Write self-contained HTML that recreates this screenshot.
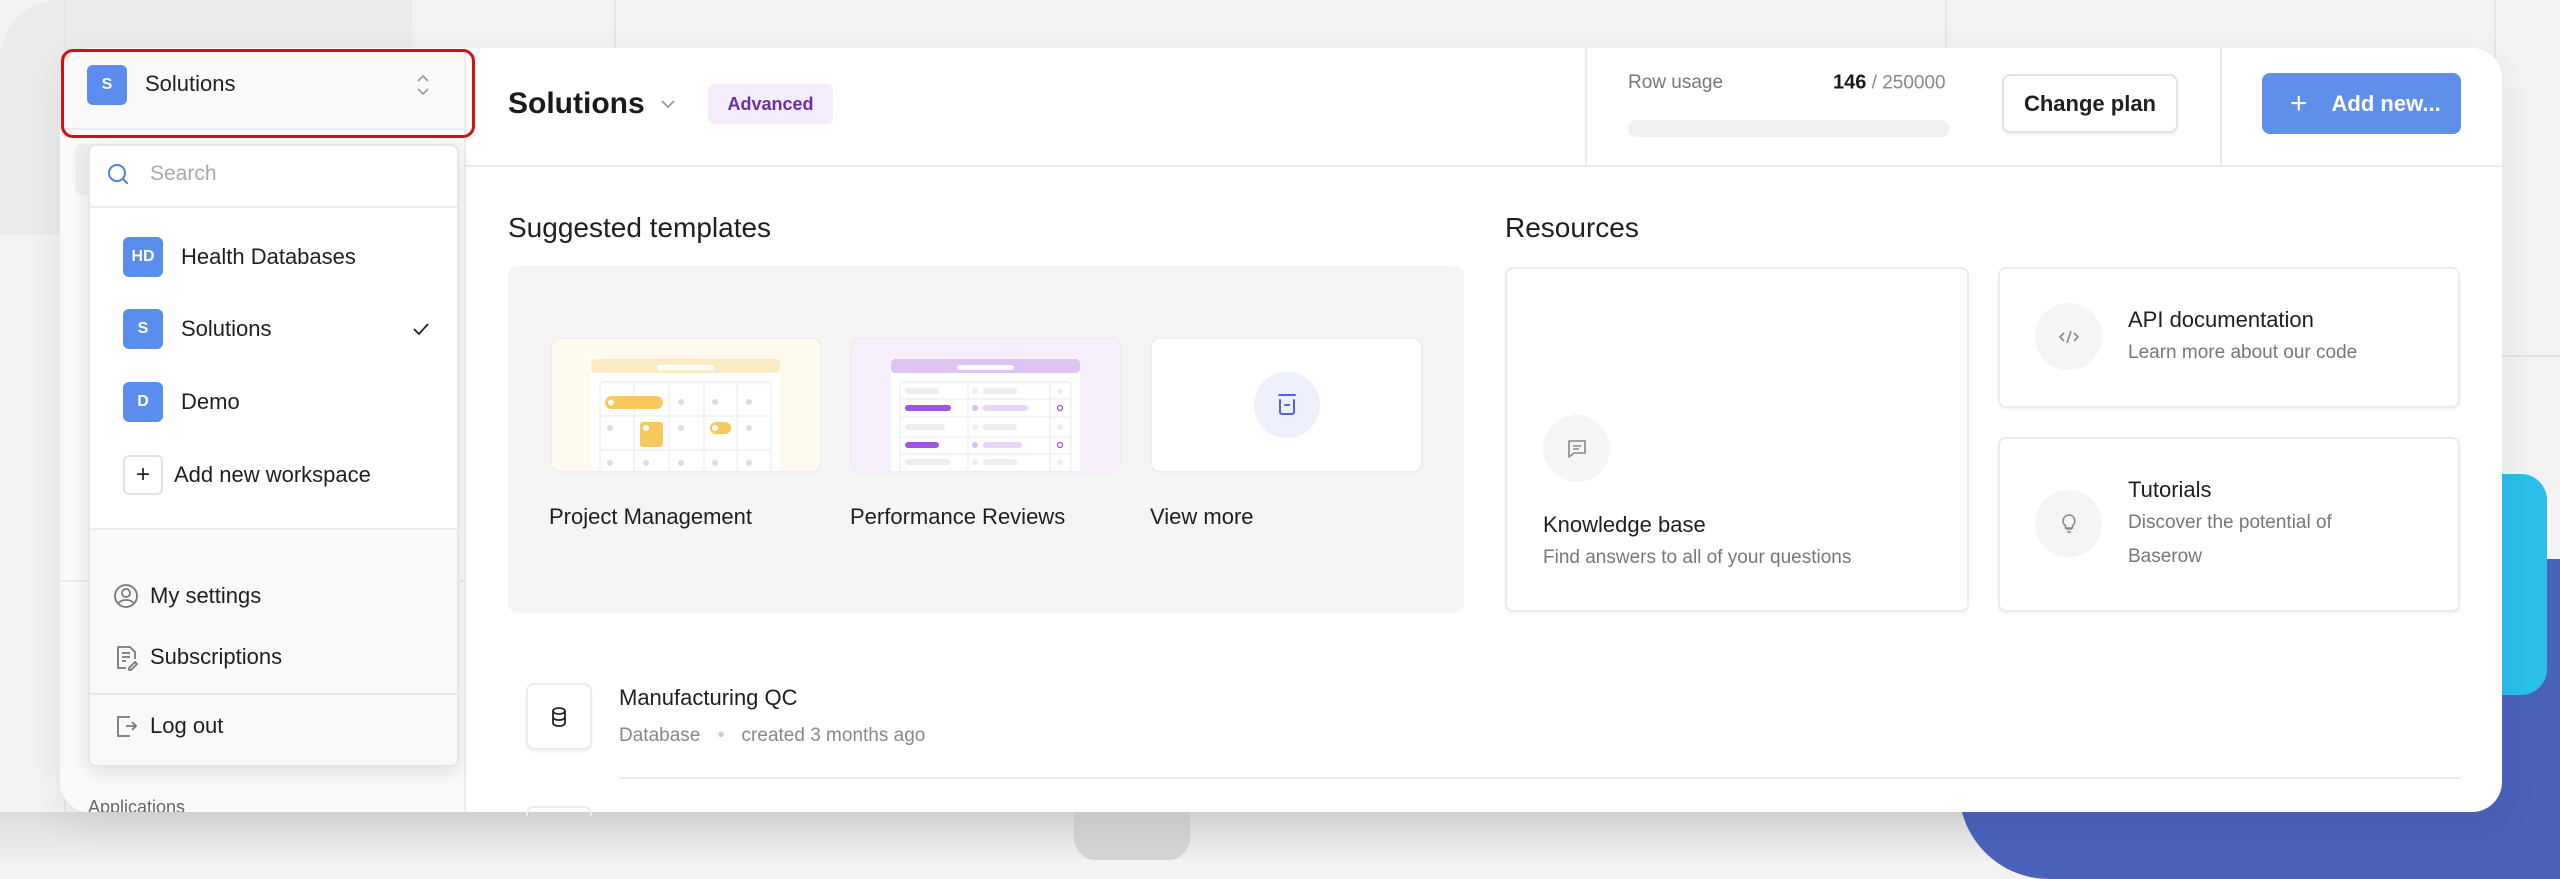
<!DOCTYPE html>
<html><head><meta charset="utf-8"><style>
*{box-sizing:border-box;margin:0;padding:0}
body{width:2560px;height:860px;overflow:hidden;position:relative;background:#f3f3f3;font-family:"Liberation Sans",sans-serif;color:#1f1f1f}
.a{position:absolute}
.vl{position:absolute;width:2px;background:#e6e6e6}
.av{position:absolute;width:40px;height:40px;border-radius:6px;background:#5b8def;color:#fff;font-weight:bold;font-size:16px;display:flex;align-items:center;justify-content:center}
.t{position:absolute;white-space:nowrap;transform:translateY(-50%)}
.card{position:absolute;background:#fff;border:2px solid #ececec;border-radius:8px;box-shadow:0 2px 3px rgba(0,0,0,.05)}
.circ{position:absolute;width:67px;height:67px;border-radius:50%;background:#f5f5f5;display:flex;align-items:center;justify-content:center}
</style></head><body>
<!-- background -->
<div class="a" style="left:0;top:0;width:412px;height:234px;background:#ececec;border-top-left-radius:60px"></div>
<div class="a" style="left:0;top:129px;width:60px;height:105px;background:#ececec"></div>
<div class="vl" style="left:64px;top:0;height:860px"></div>
<div class="vl" style="left:614px;top:0;height:860px"></div>
<div class="vl" style="left:1945px;top:0;height:860px"></div>
<div class="vl" style="left:2494px;top:0;height:860px"></div>
<div class="a" style="left:0;top:812px;width:2560px;height:48px;background:linear-gradient(#dcdcdc,#efefef)"></div>
<div class="a" style="left:1074px;top:800px;width:116px;height:60px;background:#d3d3d3;border-radius:0 0 22px 22px"></div>
<div class="a" style="left:1959px;top:559px;width:620px;height:320px;background:#4a62ba;border-radius:0 0 0 90px"></div>
<div class="a" style="left:2420px;top:474px;width:127px;height:221px;background:#2bbfe9;border-radius:0 26px 26px 0"></div>
<div class="a" style="left:2490px;top:355px;width:70px;height:2px;background:#e4e4e4"></div>

<!-- main window -->
<div class="a" style="left:60px;top:48px;width:2442px;height:764px;background:#fff;border-radius:30px;overflow:hidden;box-shadow:0 10px 40px rgba(0,0,0,.08)">
 <div class="a" style="left:0;top:0;width:406px;height:764px;background:#fafafa;border-right:2px solid #ececec"></div>
 <div class="a" style="left:0;top:80px;width:406px;height:2px;background:#ececec"></div>
 <div class="a" style="left:0;top:532px;width:406px;height:2px;background:#ececec"></div>
 <div class="a" style="left:15px;top:96px;width:380px;height:51px;background:#f0f0f0;border-radius:6px"></div>
 <div class="a" style="left:28px;top:749px;font-size:18px;color:#666">Applications</div>
 <div class="a" style="left:406px;top:117px;width:2036px;height:2px;background:#ececec"></div>
 <div class="a" style="left:1525px;top:0;width:2px;height:118px;background:#ececec"></div>
 <div class="a" style="left:2160px;top:0;width:2px;height:118px;background:#ececec"></div>
</div>

<!-- sidebar header -->
<div class="av" style="left:87px;top:65px">S</div>
<div class="t" style="left:145px;top:84px;font-size:22px">Solutions</div>
<svg class="a" style="left:414px;top:72px" width="18" height="26" viewBox="0 0 18 26"><path d="M4 9l5-5 5 5M4 17l5 5 5-5" fill="none" stroke="#999" stroke-width="1.6"/></svg>
<div class="a" style="left:61px;top:49px;width:414px;height:89px;border:3px solid #d50f0f;border-radius:12px"></div>

<!-- header main -->
<div class="t" style="left:508px;top:104px;font-size:30px;font-weight:bold;color:#1a1a1a">Solutions</div>
<svg class="a" style="left:660px;top:98px" width="16" height="12" viewBox="0 0 16 12"><path d="M2 3l6 6 6-6" fill="none" stroke="#999" stroke-width="1.8"/></svg>
<div class="a" style="left:708px;top:84px;width:125px;height:40px;background:#f5edfc;border-radius:6px;color:#6b2fa0;font-weight:bold;font-size:18px;display:flex;align-items:center;justify-content:center">Advanced</div>
<div class="t" style="left:1628px;top:83px;font-size:19px;color:#777">Row usage</div>
<div class="t" style="left:1833px;top:83px;font-size:19px;color:#888"><b style="color:#1a1a1a;font-size:20px">146</b> / 250000</div>
<div class="a" style="left:1628px;top:120px;width:321px;height:17px;background:#f0f0f0;border-radius:9px"></div>
<div class="a" style="left:2002px;top:74px;width:176px;height:59px;border:2px solid #e2e2e2;border-radius:8px;background:#fff;box-shadow:0 2px 3px rgba(0,0,0,.06);font-size:22px;font-weight:bold;display:flex;align-items:center;justify-content:center">Change plan</div>
<div class="a" style="left:2262px;top:73px;width:199px;height:61px;background:#5f8fe8;border-radius:8px;color:#fff;font-size:22px;font-weight:bold;display:flex;align-items:center;padding-left:28px"><span style="font-weight:normal;font-size:30px;margin-right:24px">+</span>Add new...</div>

<!-- templates -->
<div class="t" style="left:508px;top:228px;font-size:28px">Suggested templates</div>
<div class="a" style="left:508px;top:266px;width:956px;height:347px;background:#f5f5f5;border-radius:10px"></div>
<div class="a" style="left:550px;top:337px;width:272px;height:136px;background:#fffaee;border:2px solid #efefef;border-radius:10px;overflow:hidden">
<svg width="272" height="136" viewBox="550 337 272 136" style="position:absolute;left:-2px;top:-2px">
<rect x="591" y="359" width="189" height="120" fill="#fff"/>
<rect x="591" y="359" width="189" height="14" rx="4" fill="#fcecc6"/>
<rect x="657" y="365" width="57" height="5" rx="2.5" fill="#fff"/>
<g stroke="#eee" stroke-width="1.2" fill="none"><rect x="600" y="382" width="171" height="100" rx="4"/><path d="M634 382v100M669 382v100M704 382v100M737 382v100M600 416h171M600 450h171"/></g>
<rect x="605" y="396" width="58" height="13" rx="6.5" fill="#f8c95f"/><circle cx="611" cy="402.5" r="3" fill="#fff"/>
<rect x="640" y="422" width="23" height="25" rx="3" fill="#f8c95f"/><circle cx="646" cy="428" r="3" fill="#fff"/>
<rect x="710" y="422" width="21" height="12" rx="6" fill="#f8c95f"/><circle cx="715" cy="428" r="3" fill="#fff"/>
<g fill="#ddd"><circle cx="681" cy="402" r="3"/><circle cx="715" cy="402" r="3"/><circle cx="749" cy="402" r="3"/><circle cx="610" cy="428" r="3"/><circle cx="681" cy="428" r="3"/><circle cx="749" cy="428" r="3"/><circle cx="610" cy="463" r="3"/><circle cx="646" cy="463" r="3"/><circle cx="681" cy="463" r="3"/><circle cx="715" cy="463" r="3"/><circle cx="749" cy="463" r="3"/></g>
</svg></div>
<div class="a" style="left:850px;top:337px;width:272px;height:136px;background:#f7effc;border:2px solid #efefef;border-radius:10px;overflow:hidden">
<svg width="272" height="136" viewBox="850 337 272 136" style="position:absolute;left:-2px;top:-2px">
<rect x="891" y="359" width="189" height="120" fill="#fff"/>
<rect x="891" y="359" width="189" height="14" rx="4" fill="#dfc3f3"/>
<rect x="957" y="365" width="57" height="5" rx="2.5" fill="#fff"/>
<g stroke="#eee" stroke-width="1.2" fill="none"><rect x="900" y="382" width="171" height="100" rx="4"/><path d="M968 382v100M1050 382v100M900 399h171M900 417h171M900 437h171M900 454h171"/></g>
<g fill="#eee"><rect x="905" y="388" width="34" height="6" rx="3"/><rect x="905" y="424" width="40" height="6" rx="3"/><rect x="905" y="459" width="45" height="6" rx="3"/><rect x="983" y="388" width="34" height="6" rx="3"/><rect x="983" y="424" width="34" height="6" rx="3"/><rect x="983" y="459" width="34" height="6" rx="3"/><circle cx="975" cy="391" r="3"/><circle cx="975" cy="427" r="3"/><circle cx="975" cy="462" r="3"/><circle cx="1060" cy="391" r="3"/><circle cx="1060" cy="427" r="3"/><circle cx="1060" cy="462" r="3"/></g>
<rect x="905" y="405" width="46" height="6" rx="3" fill="#a155e0"/><rect x="905" y="442" width="34" height="6" rx="3" fill="#a155e0"/>
<rect x="983" y="405" width="45" height="6" rx="3" fill="#e8d3f8"/><rect x="983" y="442" width="39" height="6" rx="3" fill="#e8d3f8"/>
<circle cx="975" cy="408" r="3" fill="#dcbcf5"/><circle cx="975" cy="445" r="3" fill="#dcbcf5"/>
<circle cx="1060" cy="408" r="2.5" fill="none" stroke="#a155e0" stroke-width="1.3"/><circle cx="1060" cy="445" r="2.5" fill="none" stroke="#a155e0" stroke-width="1.3"/>
</svg></div>
<div class="a" style="left:1150px;top:337px;width:273px;height:136px;background:#fff;border:2px solid #efefef;border-radius:10px"></div>
<div class="a" style="left:1254px;top:372px;width:66px;height:66px;border-radius:50%;background:#eef0fc"></div>
<svg class="a" style="left:1276px;top:393px" width="22" height="24" viewBox="0 0 22 24"><path d="M3 2h16M4 7v12a2 2 0 0 0 2 2h10a2 2 0 0 0 2-2V7M9 12h4" fill="none" stroke="#4f63e0" stroke-width="2" stroke-linecap="round"/></svg>
<div class="t" style="left:549px;top:517px;font-size:22px">Project Management</div>
<div class="t" style="left:850px;top:517px;font-size:22px">Performance Reviews</div>
<div class="t" style="left:1150px;top:517px;font-size:22px">View more</div>

<!-- resources -->
<div class="t" style="left:1505px;top:228px;font-size:28px">Resources</div>
<div class="card" style="left:1505px;top:267px;width:464px;height:345px"></div>
<div class="circ" style="left:1543px;top:415px"><svg width="24" height="24" viewBox="0 0 24 24"><path d="M4 4h16v12H9l-5 4z M8 9h8M8 12h6" fill="none" stroke="#888" stroke-width="1.6" stroke-linejoin="round"/></svg></div>
<div class="t" style="left:1543px;top:525px;font-size:22px">Knowledge base</div>
<div class="t" style="left:1543px;top:558px;font-size:19px;color:#777">Find answers to all of your questions</div>
<div class="card" style="left:1998px;top:267px;width:462px;height:141px"></div>
<div class="circ" style="left:2035px;top:303px"><svg width="24" height="24" viewBox="0 0 24 24"><path d="M7 8l-4 4 4 4M17 8l4 4-4 4M14 6l-4 12" fill="none" stroke="#888" stroke-width="1.6"/></svg></div>
<div class="t" style="left:2128px;top:320px;font-size:22px">API documentation</div>
<div class="t" style="left:2128px;top:353px;font-size:19px;color:#777">Learn more about our code</div>
<div class="card" style="left:1998px;top:437px;width:462px;height:175px"></div>
<div class="circ" style="left:2035px;top:490px"><svg width="24" height="24" viewBox="0 0 24 24"><path d="M9 17h6M10 20h4M12 3a6 6 0 0 0-3.5 10.8V16h7v-2.2A6 6 0 0 0 12 3z" fill="none" stroke="#888" stroke-width="1.6"/></svg></div>
<div class="t" style="left:2128px;top:490px;font-size:22px">Tutorials</div>
<div class="t" style="left:2128px;top:523px;font-size:19px;color:#777">Discover the potential of</div>
<div class="t" style="left:2128px;top:557px;font-size:19px;color:#777">Baserow</div>

<!-- app list -->
<div class="a" style="left:526px;top:683px;width:66px;height:67px;border:2px solid #ececec;border-radius:8px;background:#fff;box-shadow:0 2px 3px rgba(0,0,0,.05)"></div>
<svg class="a" style="left:549px;top:706px" width="20" height="22" viewBox="0 0 20 22"><ellipse cx="10" cy="5" rx="6" ry="3" fill="none" stroke="#222" stroke-width="1.8"/><path d="M4 5v12c0 1.7 2.7 3 6 3s6-1.3 6-3V5M4 11c0 1.7 2.7 3 6 3s6-1.3 6-3" fill="none" stroke="#222" stroke-width="1.8"/></svg>
<div class="t" style="left:619px;top:698px;font-size:22px">Manufacturing QC</div>
<div class="t" style="left:619px;top:736px;font-size:19px;color:#888">Database <span style="color:#ccc;margin:0 12px">•</span> created 3 months ago</div>
<div class="a" style="left:619px;top:777px;width:1842px;height:2px;background:#ececec"></div>
<div class="a" style="left:526px;top:806px;width:66px;height:10px;border:2px solid #ececec;border-bottom:none;border-radius:8px 8px 0 0"></div>

<!-- dropdown -->
<div class="a" style="left:88px;top:144px;width:371px;height:623px;background:#fff;border:2px solid #e6e6e6;border-radius:8px;box-shadow:0 6px 20px rgba(0,0,0,.1);overflow:hidden">
 <div class="a" style="left:0;top:60px;width:371px;height:2px;background:#ececec"></div>
 <div class="a" style="left:0;top:382px;width:371px;height:245px;background:#f9f9f9;border-top:2px solid #ececec"></div>
 <div class="a" style="left:0;top:547px;width:371px;height:2px;background:#e8e8e8"></div>
</div>
<svg class="a" style="left:106px;top:162px" width="24" height="24" viewBox="0 0 24 24"><circle cx="11" cy="11" r="8" fill="none" stroke="#4f7fe0" stroke-width="2"/><path d="M17 17l4 4" stroke="#4f7fe0" stroke-width="2" stroke-linecap="round"/></svg>
<div class="t" style="left:150px;top:174px;font-size:21px;color:#aaa">Search</div>
<div class="av" style="left:123px;top:237px">HD</div>
<div class="t" style="left:181px;top:257px;font-size:22px">Health Databases</div>
<div class="av" style="left:123px;top:309px">S</div>
<div class="t" style="left:181px;top:329px;font-size:22px">Solutions</div>
<svg class="a" style="left:411px;top:320px" width="20" height="18" viewBox="0 0 20 18"><path d="M3 9l5 5 9-10" fill="none" stroke="#222" stroke-width="1.8"/></svg>
<div class="av" style="left:123px;top:382px">D</div>
<div class="t" style="left:181px;top:402px;font-size:22px">Demo</div>
<div class="a" style="left:123px;top:455px;width:40px;height:40px;border:2px solid #e2e2e2;border-radius:6px;background:#fff;font-size:24px;display:flex;align-items:center;justify-content:center">+</div>
<div class="t" style="left:174px;top:475px;font-size:22px">Add new workspace</div>
<svg class="a" style="left:113px;top:583px" width="26" height="26" viewBox="0 0 26 26"><circle cx="13" cy="13" r="11" fill="none" stroke="#777" stroke-width="1.8"/><circle cx="13" cy="10" r="4" fill="none" stroke="#777" stroke-width="1.8"/><path d="M6 20c2-4 12-4 14 0" fill="none" stroke="#777" stroke-width="1.8"/></svg>
<div class="t" style="left:150px;top:596px;font-size:22px">My settings</div>
<svg class="a" style="left:114px;top:644px" width="26" height="28" viewBox="0 0 26 28"><path d="M12 24H4V3h12l5 5v7M8 9h8M8 13h8M8 17h4M15 24l6-6 2 2-6 6h-2z" fill="none" stroke="#777" stroke-width="1.8" stroke-linejoin="round"/></svg>
<div class="t" style="left:150px;top:657px;font-size:22px">Subscriptions</div>
<svg class="a" style="left:114px;top:713px" width="26" height="26" viewBox="0 0 26 26"><path d="M16 4H4v19h12M12 13h10M18 9l4 4-4 4" fill="none" stroke="#777" stroke-width="1.8"/></svg>
<div class="t" style="left:150px;top:726px;font-size:22px">Log out</div>
</body></html>
